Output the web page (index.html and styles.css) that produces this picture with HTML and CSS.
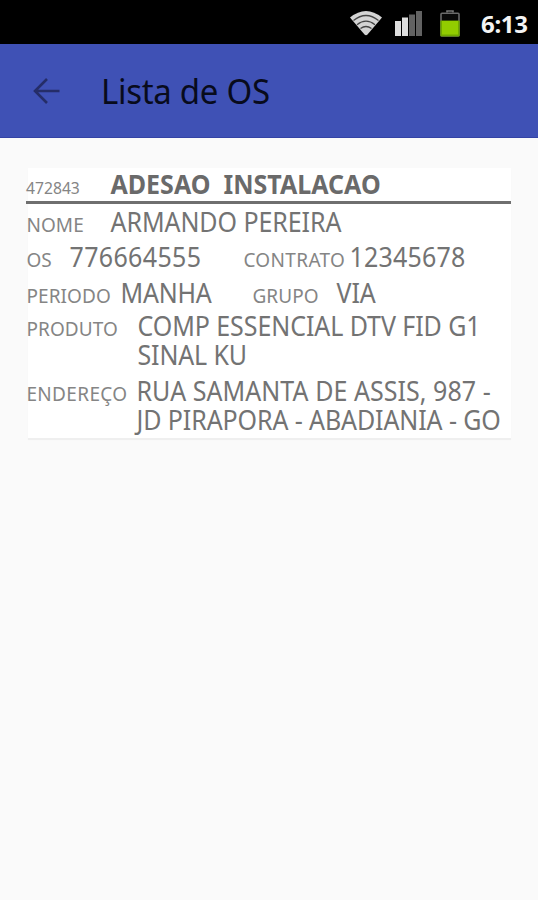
FILE: index.html
```
<!DOCTYPE html>
<html lang="pt-BR">
<head>
<meta charset="utf-8">
<title>Lista de OS</title>
<link rel="stylesheet" href="styles.css">
</head>
<body>
<div class="status">
  <svg class="wifi" width="34" height="26" viewBox="0 0 34 26">
    <path d="M1 7.500Q17-5.500 33 7.500L18.500 24.500Q17 26 15.500 24.500Z" fill="#d4d4d4"/>
    <g fill="none" stroke="#444" stroke-width="1.300">
      <path d="M4.500 10.500Q17 .5 29.500 10.500"/>
      <path d="M8 14.700Q17 7.500 26 14.700"/>
      <path d="M11.500 18.500Q17 14.500 22.500 18.500"/>
    </g>
  </svg>
  <svg class="signal" width="27" height="25" viewBox="0 0 27 25">
    <g fill="#dedede"><rect x="0" y="10" width="6" height="15"/><rect x="7" y="6.500" width="6" height="18.500"/></g>
    <g fill="#626262"><rect x="14" y="3.500" width="6" height="21.500"/><rect x="21" y="0" width="6" height="25"/></g>
  </svg>
  <svg class="battery" width="20" height="27" viewBox="0 0 20 27">
    <path d="M7 2.500V1H13V2.500" fill="none" stroke="#777" stroke-width="1.600"/>
    <rect x="1" y="3.200" width="18" height="22.800" rx="1" fill="#080808" stroke="#6a6a6a" stroke-width="1.600"/>
    <rect x=".3" y="10.500" width="19.400" height="16" rx="1" fill="#70a800"/>
    <rect x="2" y="11" width="16" height="13.500" fill="#92cc00"/>
  </svg>
  <span class="clock">6:13</span>
</div>
<header class="bar">
  <svg class="back" width="28" height="28" viewBox="0 0 28 28" fill="none" stroke="#252d68" stroke-width="2.600">
    <path d="M27.500 14H3M15 2L3 14L15 26"/>
  </svg>
  <h1>Lista de OS</h1>
</header>
<main class="card">
  <div class="row head"><span class="id">472843</span><span class="type">ADESAO&nbsp; INSTALACAO</span></div>
  <div class="row nome"><span class="label">NOME</span><span class="value">ARMANDO PEREIRA</span></div>
  <div class="row os"><span class="label">OS</span><span class="value number">776664555</span><span class="label wide second">CONTRATO</span><span class="value contract">12345678</span></div>
  <div class="row periodo"><span class="label">PERIODO</span><span class="value period">MANHA</span><span class="label second">GRUPO</span><span class="value">VIA</span></div>
  <div class="row produto"><span class="label">PRODUTO</span><div class="lines"><div class="value">COMP ESSENCIAL DTV FID G1</div><div class="value kit">SINAL KU</div></div></div>
  <div class="row endereco"><span class="label wide">ENDEREÇO</span><div class="lines"><div class="value street">RUA SAMANTA DE ASSIS, 987 -</div><div class="value city">JD PIRAPORA - ABADIANIA - GO</div></div></div>
</main>
</body>
</html>
```
FILE: styles.css
```
* { box-sizing: border-box; }
body {
  margin: 0;
  min-height: 900px;
  background: #fafafa;
  color: #737373;
  font-family: "Noto Sans", sans-serif;
}
svg { display: block; flex: none; }

.status {
  height: 44px;
  background: #000;
  display: flex;
  justify-content: flex-end;
  align-items: flex-start;
  padding: 10px 9px 0 0;
}
.wifi { margin-right: 1px; }
.signal { margin: 1px 0 0 11px; }
.battery { margin-left: 18px; }
.clock {
  width: 48px;
  margin-left: 21px;
  color: #f4f4f4;
  font-size: 24px;
  font-weight: 700;
  line-height: 28px;
  letter-spacing: -0.3px;
  white-space: nowrap;
}

.bar {
  height: 94px;
  background: #3f51b5;
  border-bottom: 1px solid #3443a5;
  display: flex;
  align-items: center;
  padding-left: 32px;
}
.bar h1 {
  margin: 2px 0 0 41px;
  color: #080b1c;
  font-size: 33px;
  font-weight: 400;
  line-height: 44px;
  letter-spacing: -0.3px;
  transform: scaleY(1.03);
}

.card {
  width: 483px;
  height: 270px;
  margin: 30px 0 0 28px;
  background: #fff;
  box-shadow: 0 2px 1px #efefef;
}
.row {
  display: flex;
  align-items: baseline;
  width: 485px;
  margin-left: -2px;
  white-space: nowrap;
  line-height: 29px;
}
/* Condensed look: glyphs are stretched slightly upwards from the baseline. */
.label, .value, .type { transform: translateY(0.6px) scaleY(1.05); transform-origin: 0 24px; }
.label { font-size: 19px; color: #858585; letter-spacing: 0.1px; padding-left: 0.4px; }
.wide { letter-spacing: 0.35px; }
.value {
  font-size: 25px;
  letter-spacing: -0.07px;
  padding-left: 0.5px;
  transform: scaleY(1.06);
}

.head { height: 36px; padding-top: 1px; border-bottom: 3px solid #6f6f6f; }
.id { width: 84px; font-size: 15.7px; color: #858585; transform: translateY(1px); }
.type { padding-left: 0.5px; font-size: 25px; font-weight: 700; color: #6a6a6a; }

.nome { margin-top: 4px; height: 35px; }
.nome .label { width: 84px; }

.os { height: 36px; }
.os .label { width: 43px; }
.os .number { width: 174px; letter-spacing: 0.35px; }
.os .second { width: 106px; }
.contract { letter-spacing: 0.2px; }

.periodo { height: 33px; }
.periodo .label { width: 94px; }
.period { width: 132px; letter-spacing: -0.25px; }
.periodo .second { width: 84px; }

.produto { height: 65px; }
.produto .label { width: 111px; }
.kit { letter-spacing: -0.15px; }

.endereco .label { width: 110px; }
.street { letter-spacing: 0.05px; }
.city { letter-spacing: -0.1px; }
```
